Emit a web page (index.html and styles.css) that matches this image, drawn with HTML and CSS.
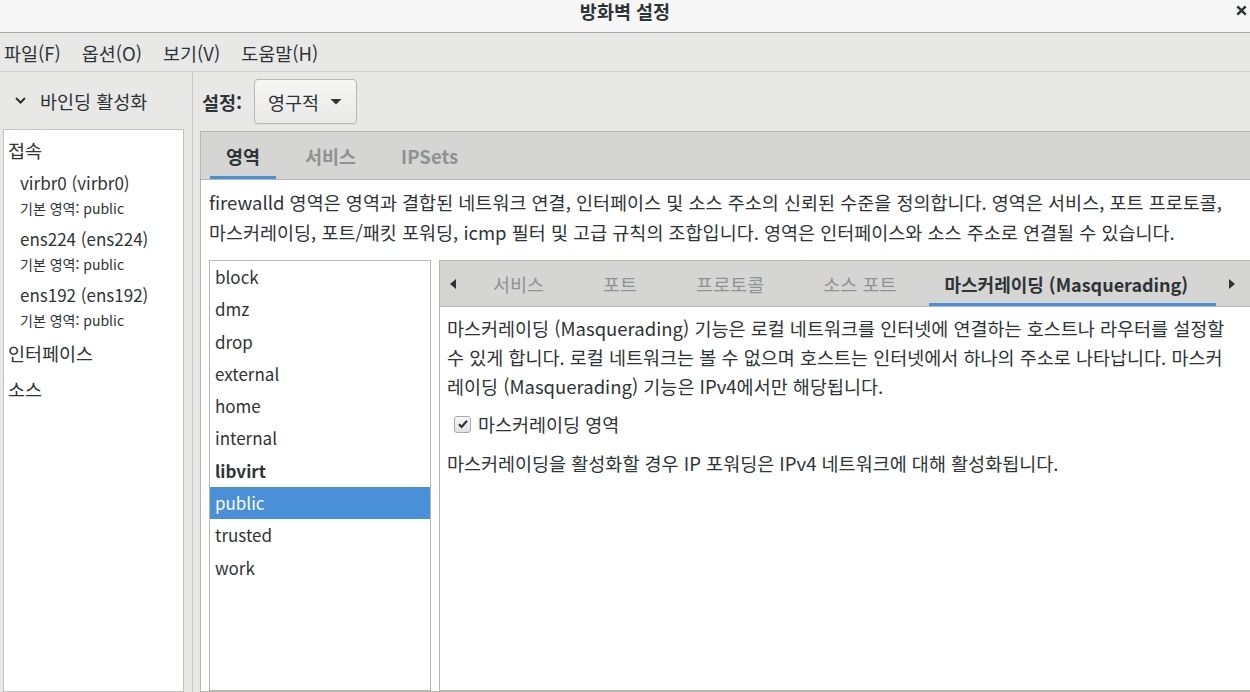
FILE: index.html
```html
<!DOCTYPE html>
<html lang="ko">

<head>
    <meta charset="UTF-8">
    <meta name="viewport" content="width=device-width, initial-scale=1.0">
    <title>방화벽 설정</title>
    <link rel="stylesheet" href="styles.css">
</head>

<body>
    <div class="titlebar">
        <div class="title">방화벽 설정</div>
        <svg class="close" viewBox="0 0 11 11">
            <path d="M1.3 1.3l8.4 8.4M9.7 1.3l-8.4 8.4" stroke="#2e3436" stroke-width="2.4" />
        </svg>
    </div>

    <div class="menubar">
        <span>파일(F)</span>
        <span>옵션(O)</span>
        <span>보기(V)</span>
        <span>도움말(H)</span>
    </div>

    <div class="main">
        <div class="sidebar">
            <div class="bind-toggle">
                <svg class="chevron" viewBox="0 0 11 7">
                    <path d="M1 1l4.5 4.5L10 1" fill="none" stroke="#2e3436" stroke-width="2" />
                </svg>
                <span>바인딩 활성화</span>
            </div>
            <div class="conn-box">
                <div class="group-title">접속</div>
                <div class="conn">
                    <div class="conn-name">virbr0 (virbr0)</div>
                    <div class="conn-zone">기본 영역: public</div>
                </div>
                <div class="conn">
                    <div class="conn-name">ens224 (ens224)</div>
                    <div class="conn-zone">기본 영역: public</div>
                </div>
                <div class="conn">
                    <div class="conn-name">ens192 (ens192)</div>
                    <div class="conn-zone">기본 영역: public</div>
                </div>
                <div class="group-title tall">인터페이스</div>
                <div class="group-title tall">소스</div>
            </div>
        </div>

        <div class="content">
            <div class="settings">
                <span class="settings-label">설정:</span>
                <div class="combo">
                    <span>영구적</span>
                    <svg class="combo-arrow" viewBox="0 0 12 6">
                        <path d="M0.5 0h11L6 5.5z" fill="#2e3436" />
                    </svg>
                </div>
            </div>

            <div class="notebook">
                <div class="tabs">
                    <div class="tab active">영역</div>
                    <div class="tab">서비스</div>
                    <div class="tab">IPSets</div>
                </div>
                <div class="page">
                    <p class="desc">firewalld 영역은 영역과 결합된 네트워크 연결, 인터페이스 및 소스 주소의 신뢰된 수준을 정의합니다. 영역은 서비스, 포트 프로토콜,<br>마스커레이딩, 포트/패킷 포워딩, icmp 필터 및 고급 규칙의 조합입니다. 영역은 인터페이스와 소스 주소로 연결될 수 있습니다.</p>

                    <div class="zone-row">
                        <ul class="zone-list">
                            <li>block</li>
                            <li>dmz</li>
                            <li>drop</li>
                            <li>external</li>
                            <li>home</li>
                            <li>internal</li>
                            <li class="default">libvirt</li>
                            <li class="selected">public</li>
                            <li>trusted</li>
                            <li>work</li>
                        </ul>

                        <div class="inner-notebook">
                            <div class="inner-tabs">
                                <div class="scroll-arrow">
                                    <svg viewBox="0 0 6 10"><path d="M6 0v10L0 5z" fill="#2e3436" /></svg>
                                </div>
                                <div class="inner-tab">서비스</div>
                                <div class="inner-tab">포트</div>
                                <div class="inner-tab">프로토콜</div>
                                <div class="inner-tab">소스 포트</div>
                                <div class="inner-tab active">마스커레이딩 (Masquerading)</div>
                                <div class="scroll-arrow right">
                                    <svg viewBox="0 0 6 10"><path d="M0 0v10L6 5z" fill="#2e3436" /></svg>
                                </div>
                            </div>
                            <div class="inner-page">
                                <p class="masq-text">마스커레이딩 (Masquerading) 기능은 로컬 네트워크를 인터넷에 연결하는 호스트나 라우터를 설정할<br>수 있게 합니다. 로컬 네트워크는 볼 수 없으며 호스트는 인터넷에서 하나의 주소로 나타납니다. 마스커<br>레이딩 (Masquerading) 기능은 IPv4에서만 해당됩니다.</p>
                                <label class="check-row">
                                    <span class="checkbox">
                                        <svg viewBox="0 0 16 16"><path d="M3.4 8.2l3 3.1L12.6 4.4" fill="none" stroke="#2e3436" stroke-width="2.5" /></svg>
                                    </span>
                                    <span>마스커레이딩 영역</span>
                                </label>
                                <p class="masq-note">마스커레이딩을 활성화할 경우 IP 포워딩은 IPv4 네트워크에 대해 활성화됩니다.</p>
                            </div>
                        </div>
                    </div>
                </div>
            </div>
        </div>
    </div>
</body>

</html>
```

FILE: styles.css
```css
* {
    box-sizing: border-box;
}

body {
    margin: 0;
    width: 1250px;
    height: 692px;
    overflow: hidden;
    display: flex;
    flex-direction: column;
    background: #e8e8e7;
    color: #2e3436;
    font-family: "Noto Sans CJK KR", "Noto Sans", sans-serif;
    font-size: 18.5px;
}

p {
    margin: 0;
}

/* window title */
.titlebar {
    height: 33px;
    flex: none;
    display: grid;
    grid-template-columns: 1fr auto 1fr;
    align-items: start;
    background: #f6f6f6;
    border-bottom: 1px solid #a6a6a4;
}

.title {
    grid-column: 2;
    font-weight: bold;
    line-height: 23px;
}

.close {
    justify-self: end;
    width: 11px;
    height: 11px;
    margin: 5px 3px 0 0;
}

.menubar {
    height: 39px;
    flex: none;
    display: flex;
    align-items: center;
    gap: 21px;
    padding: 2px 0 0 4px;
    border-bottom: 1px solid #d4d4d2;
}

.main {
    flex: 1;
    display: flex;
    min-height: 0;
}

/* left column */
.sidebar {
    width: 193px;
    flex: none;
    display: flex;
    flex-direction: column;
    border-right: 1px solid #c8c8c6;
}

.bind-toggle {
    height: 57px;
    flex: none;
    display: flex;
    align-items: center;
    gap: 14px;
    padding: 0 0 0 15px;
}

.chevron {
    width: 11px;
    height: 7px;
}

.conn-box {
    flex: 1;
    width: 181px;
    margin-left: 3px;
    padding: 3px 0 0 4px;
    background: #fff;
    border: 1px solid #c2c2c0;
}

.group-title {
    line-height: 34px;
}

.group-title.tall {
    line-height: 36px;
}

.conn {
    padding: 3px 0 3px 12px;
}

.conn-name {
    font-size: 17px;
    line-height: 26px;
}

.conn-zone {
    font-size: 14px;
    line-height: 24px;
}

/* right side */
.content {
    flex: 1;
    min-width: 0;
    display: flex;
    flex-direction: column;
    padding-left: 7px;
}

.settings {
    height: 59px;
    flex: none;
    display: flex;
    align-items: center;
    gap: 12px;
    padding-left: 2px;
}

.settings-label {
    font-weight: bold;
}

.combo {
    width: 103px;
    height: 45px;
    display: flex;
    align-items: center;
    gap: 11px;
    padding-left: 13px;
    background: linear-gradient(#f6f6f5, #e9e9e8);
    border: 1px solid #b8b8b5;
    border-radius: 4px;
    box-shadow: 0 1px 0 rgba(0, 0, 0, 0.06);
}

.combo-arrow {
    width: 12px;
    height: 6px;
}

.notebook {
    flex: 1;
    min-height: 0;
    margin-right: -40px;
    display: flex;
    flex-direction: column;
    background: #fff;
    border: 1px solid #b6b6b3;
}

.tabs {
    height: 48px;
    flex: none;
    display: flex;
    gap: 13px;
    padding-left: 9px;
    background: #d5d5d4;
    border-bottom: 1px solid #b6b6b3;
}

.tab {
    display: flex;
    align-items: center;
    padding: 0 16px;
    font-weight: bold;
    color: #8f9293;
}

.tab.active {
    color: #2e3436;
    box-shadow: inset 0 -3px 0 #4a90d9;
}

.page {
    flex: 1;
    min-height: 0;
    display: flex;
    flex-direction: column;
    padding: 7px 0 0 8px;
}

.desc {
    line-height: 30px;
    white-space: nowrap;
}

.zone-row {
    flex: 1;
    min-height: 0;
    display: flex;
    gap: 8px;
    margin-top: 13px;
}

.zone-list {
    width: 222px;
    flex: none;
    margin: 0;
    padding: 0;
    list-style: none;
    background: #fff;
    border: 1px solid #b6b6b3;
    font-size: 17px;
}

.zone-list li {
    height: 32.3px;
    line-height: 32.3px;
    padding-left: 5px;
}

.zone-list .default {
    font-weight: bold;
}

.zone-list .selected {
    background: #4a90d9;
    color: #fff;
}

.inner-notebook {
    flex: 1;
    min-width: 0;
    display: flex;
    flex-direction: column;
    border: 1px solid #b6b6b3;
}

.inner-tabs {
    height: 46px;
    flex: none;
    display: flex;
    gap: 7px;
    background: #d5d5d4;
    border-bottom: 1px solid #b6b6b3;
}

.scroll-arrow {
    width: 20px;
    display: flex;
    align-items: center;
    justify-content: center;
    padding-left: 6px;
}

.scroll-arrow.right {
    margin-left: 0;
    justify-content: flex-start;
}

.scroll-arrow svg {
    width: 6px;
    height: 10px;
}

.inner-tab {
    display: flex;
    align-items: center;
    padding: 0 26px;
    white-space: nowrap;
    color: #909394;
}

.inner-tab.active {
    padding: 0 28px 0 15px;
    font-size: 18px;
    font-weight: bold;
    color: #2e3436;
    box-shadow: inset 0 -3px 0 #4a90d9;
}

.inner-page {
    padding: 7px 0 0 7px;
}

.masq-text {
    line-height: 29px;
    white-space: nowrap;
}

.check-row {
    height: 24px;
    display: flex;
    align-items: center;
    gap: 7px;
    margin-top: 11px;
    padding-left: 7px;
}

.checkbox {
    width: 17px;
    height: 17px;
    display: flex;
    align-items: center;
    justify-content: center;
    background: linear-gradient(#f8f8f7, #e2e2e1);
    border: 1px solid #a9a9a6;
    border-radius: 3px;
}

.checkbox svg {
    width: 14px;
    height: 14px;
}

.masq-note {
    margin-top: 13px;
    line-height: 29px;
    white-space: nowrap;
}
```
